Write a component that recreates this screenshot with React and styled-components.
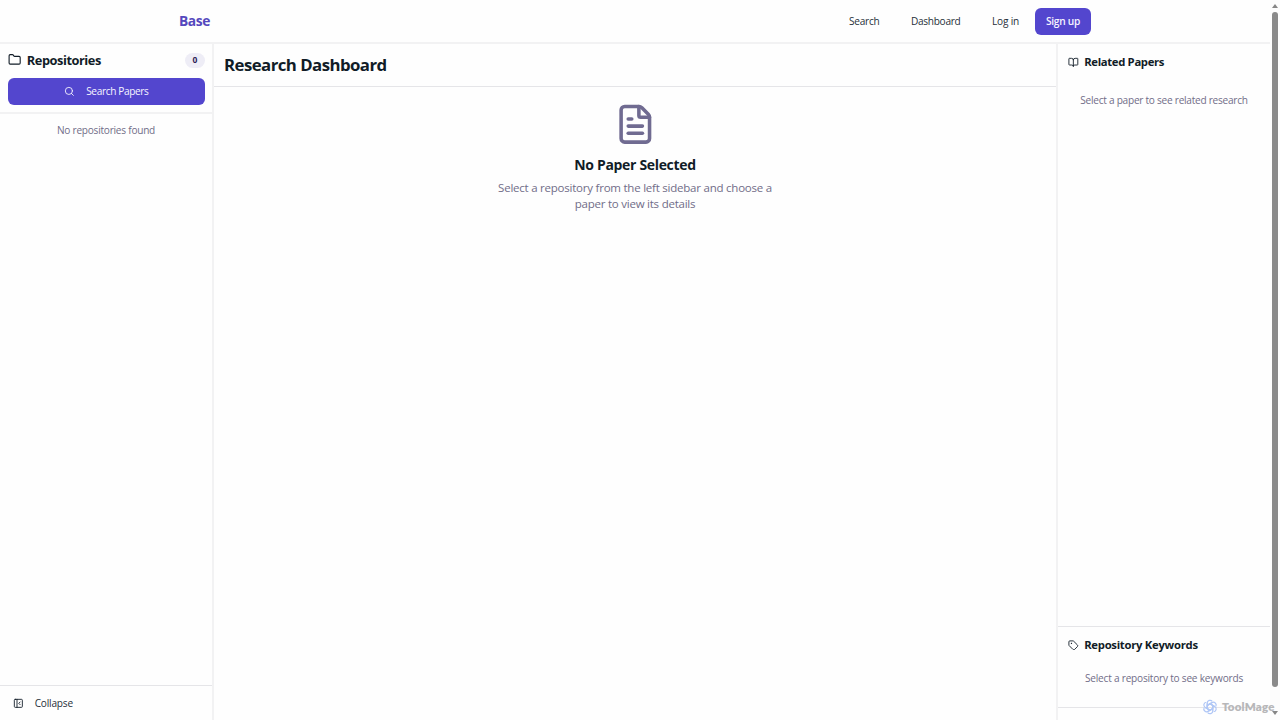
import React from 'react'
import styled, { createGlobalStyle } from 'styled-components'
import { Folder, Search, FileText, BookOpen, Tag, PanelLeftClose } from 'lucide-react'

const GlobalStyle = createGlobalStyle`
  * {
    box-sizing: border-box;
  }
  body {
    margin: 0;
    overflow: hidden;
    background: #fefefe;
    color: #111c27;
    font-family: "Open Sans", "Noto Sans", sans-serif;
  }
`

let Window = styled.div`
  display: flex;
  width: 1280px;
  height: 720px;
  overflow: hidden;
`

let Page = styled.div`
  display: flex;
  flex-direction: column;
  width: 1270px;
`

let Header = styled.header`
  display: flex;
  align-items: center;
  justify-content: space-between;
  height: 44px;
  padding: 0 179px;
  border-bottom: 2px solid #f2f2f3;
`

let Text = styled.span`
  font-size: ${p => p.$size}px;
  font-weight: ${p => p.$weight || 400};
  letter-spacing: ${p => p.$spacing || 0}px;
  color: ${p => p.$color || 'inherit'};
  line-height: 16px;
  white-space: nowrap;
`

let Nav = styled.nav`
  display: flex;
  align-items: center;
`

let NavLink = styled.a`
  display: flex;
  width: ${p => p.$width}px;
  color: #27303a;
`

let Button = styled.button`
  display: flex;
  align-items: center;
  justify-content: center;
  gap: 11px;
  width: ${p => p.$width || '100%'};
  height: 27px;
  padding: 0 0 1px;
  border: 0;
  border-radius: 6px;
  background: #5346ce;
  color: #f5f4ff;
  font-family: inherit;
`

let Columns = styled.div`
  display: flex;
  flex: 1;
  min-height: 0;
`

let Sidebar = styled.aside`
  display: flex;
  flex-direction: column;
  width: 214px;
  border-right: 2px solid #f2f2f3;
`

let SidebarTop = styled.div`
  height: 70px;
  padding: 8px 7px 0 8px;
  border-bottom: 2px solid #f2f2f3;
`

let SidebarTitle = styled.div`
  display: flex;
  align-items: center;
  height: 16px;
  margin-bottom: 10px;
`

let TitleLabel = styled.div`
  display: flex;
  flex: 1;
  margin-left: 5.5px;
`

let Badge = styled.div`
  display: flex;
  align-items: center;
  justify-content: center;
  width: 20px;
  height: 15px;
  border-radius: 8px;
  background: #eeedf6;
`

let SidebarBody = styled.div`
  display: flex;
  justify-content: center;
  flex: 1;
  padding-top: 8px;
`

let SidebarFooter = styled.div`
  display: flex;
  align-items: center;
  gap: 11px;
  height: 35px;
  padding-left: 13px;
  border-top: 1px solid #e5e5e8;
`

let Main = styled.main`
  display: flex;
  flex-direction: column;
  flex: 1;
`

let MainHeader = styled.div`
  display: flex;
  align-items: center;
  height: 43px;
  padding: 0 0 1px 10px;
  border-bottom: 1px solid #e5e5e8;
`

let EmptyState = styled.div`
  display: flex;
  flex-direction: column;
  align-items: center;
  padding-top: 15.5px;
`

let EmptyTitle = styled.div`
  display: flex;
  margin: 11.5px 0 7px;
`

let RightBar = styled.aside`
  display: flex;
  flex-direction: column;
  width: 214px;
  border-left: 2px solid #f2f2f3;
`

let Panel = styled.section`
  display: flex;
  flex-direction: column;
  height: ${p => p.$height}px;
  border-bottom: 1px solid #e5e5e8;
`

let PanelTitle = styled.div`
  display: flex;
  align-items: center;
  gap: 5.5px;
  height: 36px;
  padding-left: 10px;
`

let PanelText = styled.div`
  display: flex;
  justify-content: center;
  padding-top: ${p => p.$top}px;
`

let Scrollbar = styled.div`
  display: flex;
  flex-direction: column;
  align-items: center;
  width: 10px;
  padding: 4px 0 0;
  background: #fcfcfc;
`

let Arrow = styled.div`
  width: 0;
  height: 0;
  border: 3px solid transparent;
  ${p => p.$down
    ? 'border-top: 4px solid #858585; border-bottom: 0;'
    : 'border-bottom: 4px solid #858585; border-top: 0;'}
`

let Thumb = styled.div`
  width: 6px;
  height: 675px;
  margin: 4px 0 24px;
  border-radius: 3px;
  background: #898989;
`

let Watermark = styled.div`
  position: absolute;
  left: 1202px;
  top: 699px;
  display: flex;
  align-items: center;
  gap: 4px;
  font-family: Lato, sans-serif;
`

const muted = '#716d88'

const KnotLogo = () => (
  <svg width="16" height="16" viewBox="0 0 24 24" fill="none" stroke="#b0c7f6" strokeWidth="1.8">
    {[0, 60, 120, 180, 240, 300].map(angle => (
      <path
        key={angle}
        transform={`rotate(${angle} 12 12)`}
        d="M7.8 14.4V6.1A4.2 4.2 0 0 1 15.4 3.7M8 9.6l4-2.4 6.8 4"
      />
    ))}
  </svg>
)

export default function App() {
  return (
    <Window>
      <GlobalStyle />
      <Page>
        <Header>
          <Text $size={13.8} $weight={700} $spacing={-0.4} $color="#5548bd">Base</Text>
          <Nav>
            <NavLink $width={62}><Text $size={10.1} $spacing={-0.25}>Search</Text></NavLink>
            <NavLink $width={81}><Text $size={10.1} $spacing={-0.3}>Dashboard</Text></NavLink>
            <NavLink $width={43}><Text $size={10.1} $spacing={-0.2}>Log in</Text></NavLink>
            <Button $width="56px"><Text $size={10.2} $weight={600} $spacing={-0.3}>Sign up</Text></Button>
          </Nav>
        </Header>
        <Columns>
          <Sidebar>
            <SidebarTop>
              <SidebarTitle>
                <Folder size={13.3} strokeWidth={2} />
                <TitleLabel><Text $size={12.8} $weight={700} $spacing={-0.45}>Repositories</Text></TitleLabel>
                <Badge><Text $size={8.5} $weight={700} $color="#302357">0</Text></Badge>
              </SidebarTitle>
              <Button>
                <Search size={10.7} />
                <Text $size={10.1} $spacing={-0.36}>Search Papers</Text>
              </Button>
            </SidebarTop>
            <SidebarBody>
              <Text $size={10.1} $spacing={-0.24} $color={muted}>No repositories found</Text>
            </SidebarBody>
            <SidebarFooter>
              <PanelLeftClose size={10.7} />
              <Text $size={10.1} $spacing={-0.2} $color="#27303a">Collapse</Text>
            </SidebarFooter>
          </Sidebar>
          <Main>
            <MainHeader>
              <Text $size={16.8} $weight={700} $spacing={-0.54}>Research Dashboard</Text>
            </MainHeader>
            <EmptyState>
              <FileText size={42.67} color="#706b91" />
              <EmptyTitle>
                <Text $size={14} $weight={700} $spacing={-0.33}>No Paper Selected</Text>
              </EmptyTitle>
              <Text $size={11.5} $spacing={-0.23} $color={muted}>Select a repository from the left sidebar and choose a</Text>
              <Text $size={11.5} $spacing={-0.23} $color={muted}>paper to view its details</Text>
            </EmptyState>
          </Main>
          <RightBar>
            <Panel $height={583}>
              <PanelTitle>
                <BookOpen size={10.7} />
                <Text $size={11.3} $weight={700} $spacing={-0.33}>Related Papers</Text>
              </PanelTitle>
              <PanelText $top={12}>
                <Text $size={10.1} $spacing={-0.26} $color={muted}>Select a paper to see related research</Text>
              </PanelText>
            </Panel>
            <Panel $height={81}>
              <PanelTitle>
                <Tag size={10.7} />
                <Text $size={11.3} $weight={700} $spacing={-0.28}>Repository Keywords</Text>
              </PanelTitle>
              <PanelText $top={7}>
                <Text $size={10.1} $spacing={-0.22} $color={muted}>Select a repository to see keywords</Text>
              </PanelText>
            </Panel>
          </RightBar>
        </Columns>
      </Page>
      <Scrollbar>
        <Arrow />
        <Thumb />
        <Arrow $down />
      </Scrollbar>
      <Watermark>
        <KnotLogo />
        <Text $size={11.5} $weight={800} $spacing={0.2} $color="#b7b7b9">ToolMage</Text>
      </Watermark>
    </Window>
  )
}
